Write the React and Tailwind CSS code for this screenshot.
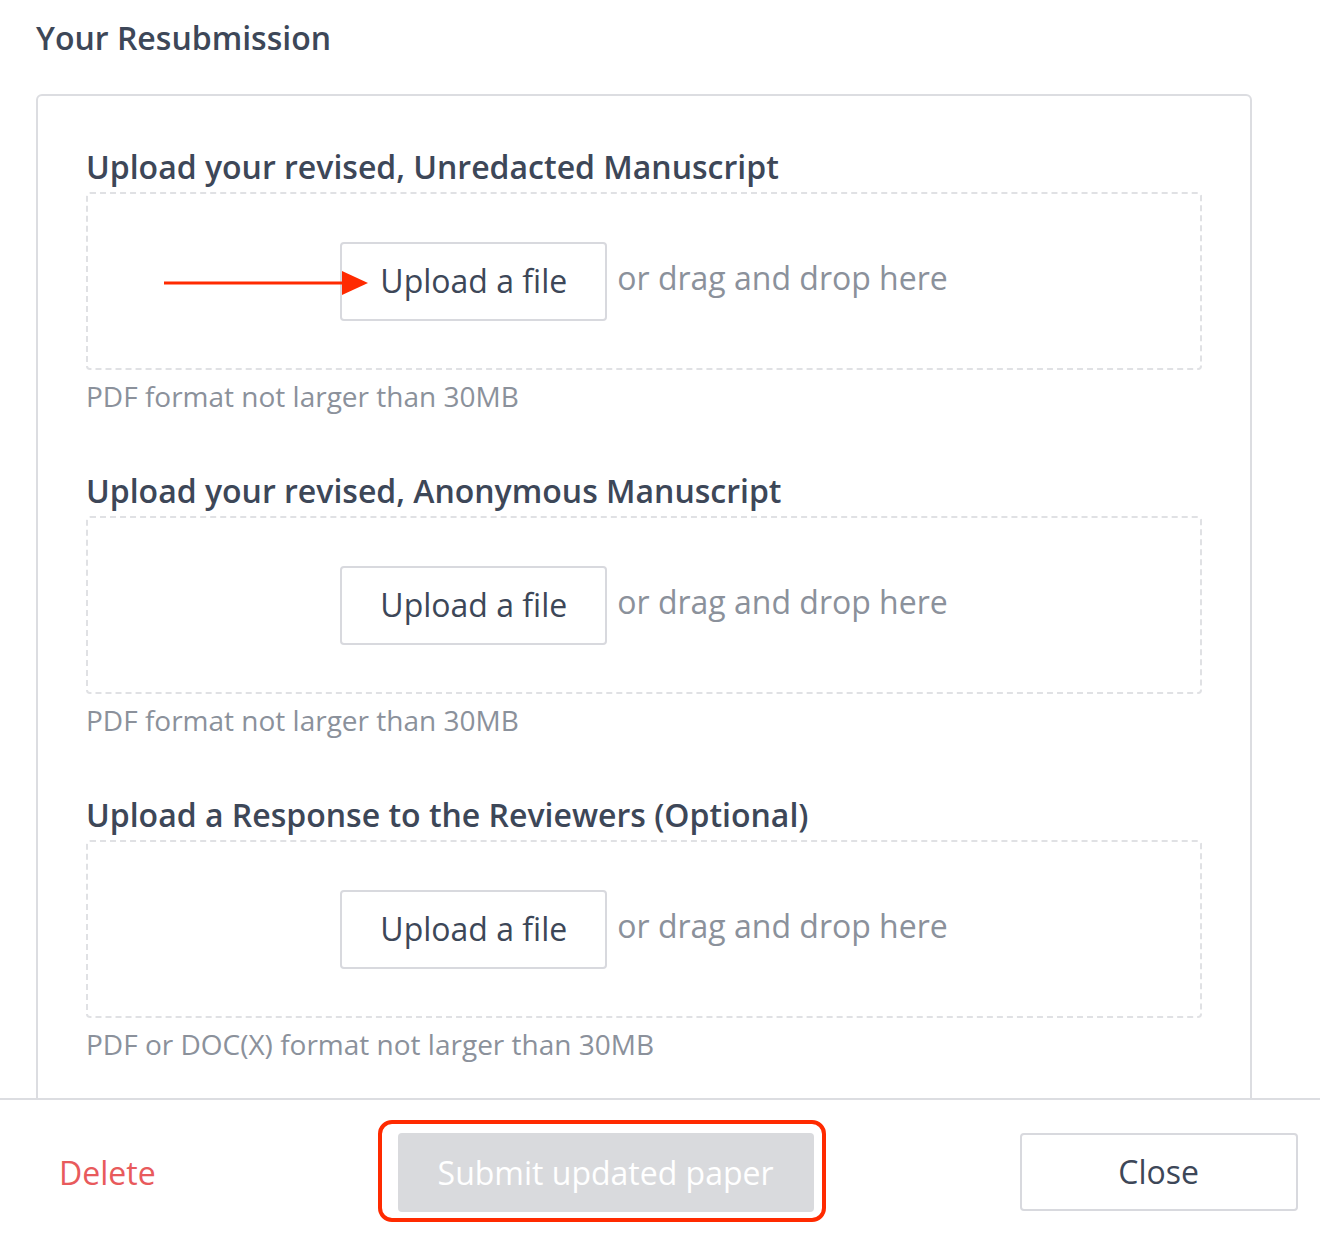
const Arrow = () => (
  <svg className="absolute left-[76px] top-[76px]" width="204" height="26" viewBox="0 0 204 26">
    <line x1="0" y1="13" x2="180" y2="13" stroke="#ff2a00" strokeWidth="3" />
    <polygon points="178,1 204,13 178,25" fill="#ff2a00" />
  </svg>
);

const UploadSection = ({ title, hint, arrow }) => (
  <div>
    <h3 className="text-[32px] leading-[40px] font-semibold text-[#3d4758]">{title}</h3>
    <div className="relative mt-[5px] h-[178px] rounded border-2 border-dashed border-[#e0e1e4] flex items-center justify-center gap-[10px]">
      {arrow && <Arrow />}
      <button className="w-[267px] h-[79px] rounded border-2 border-[#d8d9de] bg-white text-[32px] text-[#3d4758]">
        Upload a file
      </button>
      <span className="text-[32px] text-[#8b919b] -mt-[6px]">or drag and drop here</span>
    </div>
    <p className="mt-[8px] text-[28px] leading-[36px] text-[#8b919b]">{hint}</p>
  </div>
);

export default function App() {
  return (
    <div className="w-[1320px] h-[1234px] bg-white overflow-hidden flex flex-col" style={{ fontFamily: '"Open Sans", "Noto Sans", sans-serif' }}>
      <div className="h-[1098px] overflow-hidden pl-[36px] pr-[68px]">
        <h2 className="pt-[18px] text-[32px] leading-[40px] font-semibold text-[#3d4758]">Your Resubmission</h2>
        <div className="mt-[36px] rounded-md border-2 border-[#dcdde1] pt-[51px] px-[48px] pb-[60px] flex flex-col gap-[57px]">
          <UploadSection
            title="Upload your revised, Unredacted Manuscript"
            hint="PDF format not larger than 30MB"
            arrow
          />
          <UploadSection
            title="Upload your revised, Anonymous Manuscript"
            hint="PDF format not larger than 30MB"
          />
          <UploadSection
            title="Upload a Response to the Reviewers (Optional)"
            hint="PDF or DOC(X) format not larger than 30MB"
          />
        </div>
      </div>
      <div className="flex-1 border-t-2 border-[#dcdde1] flex items-start pt-[33px]">
        <button className="ml-[59px] mt-[20px] text-[32px] leading-[40px] text-[#e85a5c]">Delete</button>
        <div className="relative ml-[242px]">
          <div className="absolute -left-[20px] -right-[12px] -top-[13px] -bottom-[10px] rounded-[14px] border-4 border-[#ff2a00]" />
          <button className="relative w-[416px] h-[79px] rounded bg-[#d9dadd] text-[32px] text-white">
            Submit updated paper
          </button>
        </div>
        <button className="ml-[206px] w-[278px] h-[78px] rounded border-2 border-[#d8d9de] bg-white text-[32px] text-[#3d4758]">
          Close
        </button>
      </div>
    </div>
  );
}
